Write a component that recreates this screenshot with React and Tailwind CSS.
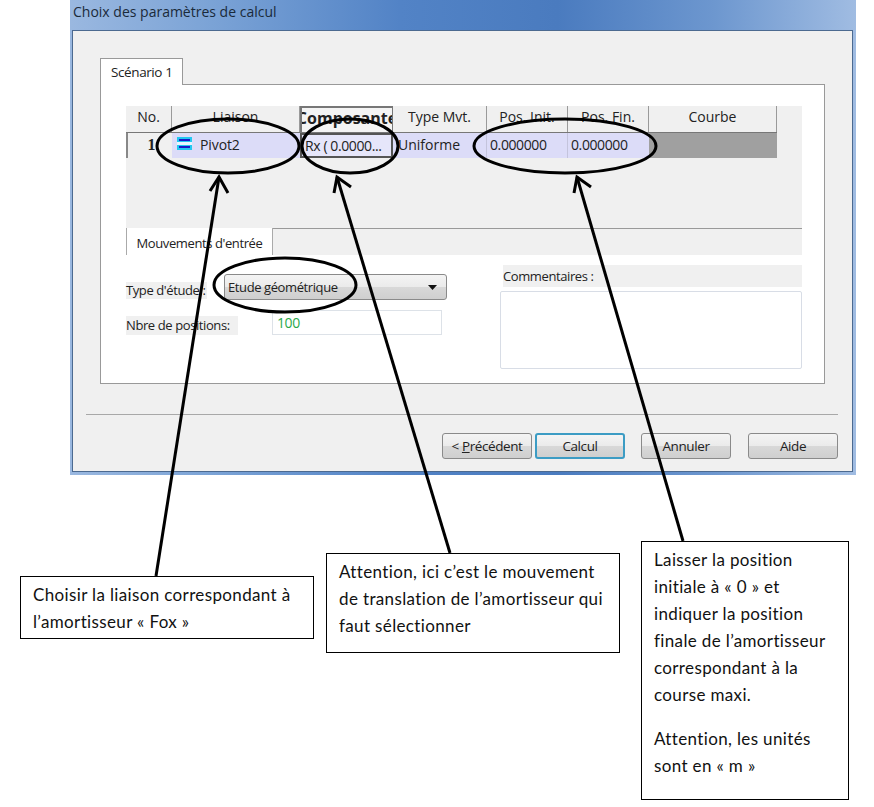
const columns = [
  { label: 'No.', width: 'w-[46px]' },
  { label: 'Liaison', width: 'w-[128px]' },
  { label: 'Composante', width: 'w-[93px]', active: true },
  { label: 'Type Mvt.', width: 'w-[94px]' },
  { label: 'Pos. Init.', width: 'w-[81px]' },
  { label: 'Pos. Fin.', width: 'w-[81px]' },
  { label: 'Courbe', width: 'w-[128px]' },
];

function PivotIcon() {
  return (
    <svg width="15" height="13" viewBox="0 0 15 13" className="shrink-0 -mt-[3px]">
      <rect x="0" y="0" width="15" height="13" fill="#22c8f0" />
      <rect x="2" y="2" width="11" height="2" fill="#1a1ac8" />
      <rect x="2" y="9" width="11" height="2" fill="#1a1ac8" />
      <rect x="0" y="5" width="15" height="3" fill="#e8f6ff" />
    </svg>
  );
}

function HeaderCell({ label, width, active }) {
  return (
    <div
      className={`${width} h-[26px] flex justify-center overflow-hidden whitespace-nowrap tracking-[0px] border-r border-[#9a9a9a] ${
        active ? 'font-bold text-[16px] leading-[20px] border-2 border-b-0 border-[#777] bg-[#f4f4f4]' : ''
      }`}
    >
      {label}
    </div>
  );
}

function DataGrid() {
  return (
    <div className="w-[676px] h-[122px] bg-[#f0f0f0] text-[14px] text-[#222]">
      <div className="flex">
        {columns.map((c) => (
          <HeaderCell key={c.label} {...c} />
        ))}
      </div>
      <div className="flex h-[26px] w-[651px] border-t border-[#777]">
        <div className="w-[46px] flex items-center justify-end pr-[17px] pb-[2px] font-bold font-['Liberation_Serif',serif] text-[16px] border-l-2 border-[#888]">
          1
        </div>
        <div className="w-[128px] flex items-center gap-[8px] pl-[5px] pb-[2px] bg-[#dcdcf8] tracking-[-0.1px]">
          <PivotIcon />
          Pivot2
        </div>
        <div className="w-[93px] flex items-center pl-[3px] pb-[1px] bg-[#e6e6fa] border-2 border-[#555] whitespace-nowrap overflow-hidden">
          Rx ( 0.0000...
        </div>
        <div className="w-[94px] flex items-center pl-[5px] pb-[2px] bg-[#dcdcf8] border-r border-[#c4c4dc] tracking-[0px]">Uniforme</div>
        <div className="w-[81px] flex items-center pl-[3px] pb-[2px] bg-[#dcdcf8] border-r border-[#c4c4dc]">0.000000</div>
        <div className="w-[81px] flex items-center pl-[3px] pb-[2px] bg-[#dcdcf8]">0.000000</div>
        <div className="w-[128px] bg-[#a0a0a0]" />
      </div>
    </div>
  );
}

function Button({ children, primary }) {
  return (
    <div
      className={`w-[90px] h-[26px] flex items-center justify-center rounded-[3px] border bg-[linear-gradient(180deg,#f4f4f4_0%,#ebebeb_48%,#d8d8d8_52%,#cfcfcf_100%)] ${
        primary ? 'border-[#3c9cc4] border-2' : 'border-[#8a8a8a]'
      }`}
    >
      {children}
    </div>
  );
}

function Dialog() {
  return (
    <div className="ml-[70px] w-[786px] h-[475px] flex flex-col bg-[#6f9ad0] bg-[linear-gradient(90deg,#9ab8e0_0%,#7ba3d6_18%,#5283c6_42%,#4a7bbf_62%,#6d97cf_82%,#a0bce2_100%)] font-['Open_Sans',sans-serif] tracking-[-0.4px]">
      <div className="h-[30px] pl-[3px] pt-[1px] text-[14px] tracking-[0px] text-[#1a2a3a]">Choix des paramètres de calcul</div>
      <div className="mx-[2px] w-[781px] h-[442px] pl-[27px] pt-[27px] bg-[#f0f0f0] border border-[#4c6a90] text-[13.500px] text-[#222]">
        <div className="w-[83px] h-[27px] -mb-px relative flex items-center pl-[10px] bg-white border border-b-0 border-[#999]">
          Scénario 1
        </div>
        <div className="w-[725px] h-[300px] pt-[21px] pl-[25px] bg-white border border-[#999] text-[13px]">
          <DataGrid />
          <div className="flex w-[676px] h-[27px] bg-[#f0f0f0] border-t border-[#999]">
            <div className="w-[147px] h-[27px] -mt-px pt-[5px] flex items-center justify-center bg-white border-l border-r border-[#aaa]">
              Mouvements d'entrée
            </div>
          </div>
          <div className="flex w-[676px] pt-[10px]">
            <div className="w-[374px] flex flex-col pt-[9px]">
              <div className="flex items-center">
                <span className="w-[81px] h-[17px] flex items-center bg-[#f0f0f0] mt-[7px] whitespace-nowrap">Type d'étude :</span>
                <div className="ml-[17px] w-[223px] h-[26px] flex items-center justify-between pl-[3px] pr-[9px] pt-[1px] rounded-[3px] border border-[#8a8a8a] bg-[linear-gradient(180deg,#f4f4f4_0%,#ebebeb_48%,#d8d8d8_52%,#cfcfcf_100%)]">
                  Etude géométrique
                  <svg width="9" height="5" viewBox="0 0 9 5">
                    <path d="M0 0h9L4.500 5z" fill="#111" />
                  </svg>
                </div>
              </div>
              <div className="flex mt-[10px]">
                <span className="w-[112px] h-[19px] mt-[6px] flex items-center bg-[#f0f0f0] whitespace-nowrap">Nbre de positions:</span>
                <div className="ml-[34px] w-[170px] h-[25px] pl-[4px] pt-[3px] leading-[17px] text-[14px] text-[#2aa84a] border border-[#dde2e8]">100</div>
              </div>
            </div>
            <div className="flex flex-col">
              <div className="w-[299px] h-[22px] ml-[3px] pt-[1px] flex items-center bg-[#f0f0f0]">Commentaires :</div>
              <div className="mt-[4px] w-[302px] h-[78px] border border-[#d8dde6] rounded-[2px]" />
            </div>
          </div>
        </div>
        <div className="w-[752px] -ml-[14px] mt-[30px] border-t border-[#a8a8a8]" />
        <div className="flex w-[752px] -ml-[14px] mt-[18px]">
          <div className="ml-[356px]">
            <Button>
              &lt;&nbsp;<span className="underline">P</span>récédent
            </Button>
          </div>
          <div className="ml-[3px]">
            <Button primary>Calcul</Button>
          </div>
          <div className="ml-[16px]">
            <Button>Annuler</Button>
          </div>
          <div className="ml-[17px]">
            <Button>Aide</Button>
          </div>
        </div>
      </div>
    </div>
  );
}

function Note({ lines, className }) {
  return (
    <div className={`border border-black bg-white font-['Lato',sans-serif] text-[17px] tracking-[0.36px] leading-[27px] text-[#111] ${className}`}>
      {lines.map((line, i) => (
        <div key={i} className={line === '' ? 'h-[17px]' : 'whitespace-nowrap'}>
          {line}
        </div>
      ))}
    </div>
  );
}

// callouts drawn over the dialog: ellipses + arrows
function Annotations() {
  const arrows = [
    { from: [156, 576], to: [219, 177], head: [[210, 191], [228, 193]] },
    { from: [450, 553], to: [337, 177], head: [[334, 193], [351, 187]] },
    { from: [683, 541], to: [577, 177], head: [[574, 193], [591, 187]] },
  ];
  return (
    <svg width="874" height="807" className="absolute inset-0 pointer-events-none" fill="none" stroke="#000" strokeWidth="3">
      <ellipse cx="228" cy="146" rx="71" ry="27" />
      <ellipse cx="350" cy="146" rx="48" ry="27" />
      <ellipse cx="565" cy="146" rx="91" ry="27" />
      <ellipse cx="285" cy="285" rx="71" ry="27" />
      {arrows.map((a, i) => (
        <g key={i}>
          <path d={`M${a.from[0]} ${a.from[1]}L${a.to[0]} ${a.to[1]}`} />
          <path d={`M${a.head[0][0]} ${a.head[0][1]}L${a.to[0]} ${a.to[1]}L${a.head[1][0]} ${a.head[1][1]}`} />
        </g>
      ))}
    </svg>
  );
}

export default function App() {
  return (
    <div className="relative w-[874px] h-[807px] overflow-hidden bg-white">
      <Dialog />
      <div className="flex items-start pl-[20px]">
        <Note
          className="w-[294px] h-[63px] mt-[101px] pl-[12px] pt-[4px]"
          lines={['Choisir la liaison correspondant à', "l’amortisseur « Fox »"]}
        />
        <Note
          className="w-[294px] h-[100px] mt-[78px] ml-[12px] pl-[12px] pt-[4px]"
          lines={['Attention, ici c’est le mouvement', 'de translation de l’amortisseur qui', 'faut sélectionner']}
        />
        <Note
          className="w-[208px] h-[259px] mt-[66px] ml-[21px] pl-[12px] pt-[4px]"
          lines={[
            'Laisser la position',
            'initiale à « 0 » et',
            'indiquer la position',
            'finale de l’amortisseur',
            'correspondant à la',
            'course maxi.',
            '',
            'Attention, les unités',
            'sont en « m »',
          ]}
        />
      </div>
      <Annotations />
    </div>
  );
}
